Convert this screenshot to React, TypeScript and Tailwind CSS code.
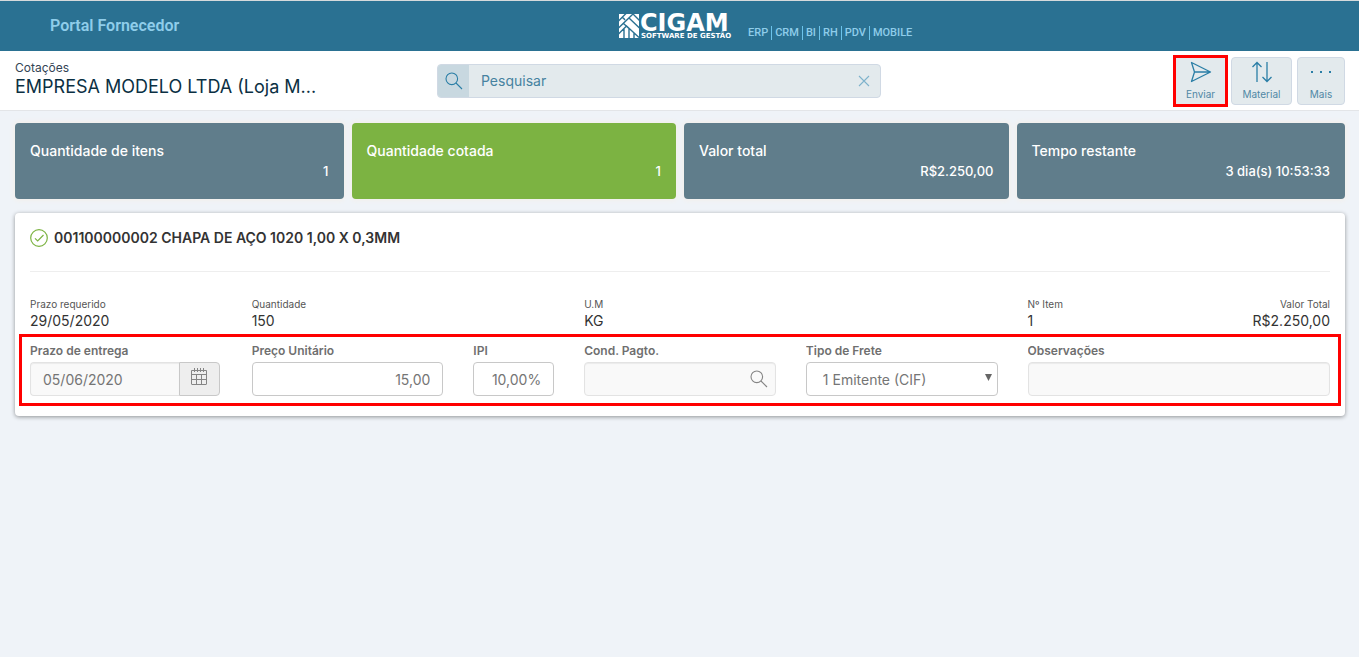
import React from "react";
import clsx from "clsx";

const summary = [
  { label: "Quantidade de itens", value: "1", color: "bg-[#607d8b]" },
  { label: "Quantidade cotada", value: "1", color: "bg-[#7cb342]" },
  { label: "Valor total", value: "R$2.250,00", color: "bg-[#607d8b]" },
  { label: "Tempo restante", value: "3 dia(s) 10:53:33", color: "bg-[#607d8b]" },
];

const details = [
  { label: "Prazo requerido", value: "29/05/2020", span: "col-span-2" },
  { label: "Quantidade", value: "150", span: "col-span-3" },
  { label: "U.M", value: "KG", span: "col-span-4" },
  { label: "Nº Item", value: "1", span: "col-span-1" },
  { label: "Valor Total", value: "R$2.250,00", span: "col-span-2 text-right" },
];

const products = ["ERP", "CRM", "BI", "RH", "PDV", "MOBILE"];

const labelClass = "block truncate text-[12px] leading-4 font-semibold text-[#6f6f6f]";
const inputClass =
  "block h-[34px] w-full min-w-0 rounded border border-[#c8c8c8] bg-white px-3 text-[14px] text-[#757575] outline-none";
const disabledClass =
  "block h-[34px] w-full min-w-0 rounded-sm border border-[#e3e3e3] bg-[#f9f9f9] px-3 text-[14px] text-[#757575] shadow-[inset_0_1px_1px_rgba(0,0,0,0.06)] outline-none";

const SearchIcon = ({ className }: { className?: string }) => (
  <svg viewBox="0 0 18 18" className={className} fill="none" stroke="currentColor" strokeWidth="1.1">
    <circle cx="6.8" cy="6.8" r="5.8" />
    <path d="M11 11l6 6" />
  </svg>
);

const CalendarIcon = () => (
  <svg viewBox="0 0 18 18" className="size-[18px]" fill="none" stroke="#858585">
    <path d="M1.5 2.500h15v13.500a.5.5 0 0 1-.5.5H2a.5.5 0 0 1-.5-.5zM1.500 6.500h15M1.500 11.500h15M6.500 6.500v10M11.500 6.500v10" />
    <path d="M4.500 0v4M7.500 0v4M10.500 0v4M13.500 0v4" />
  </svg>
);

const SendIcon = () => (
  <svg viewBox="0 0 22 22" className="size-[22px]" fill="none" stroke="#2a7ea6" strokeWidth="1.3" strokeLinejoin="round">
    <path d="M1.500 1.500L20.500 11L1.500 20.500L4.500 11zM4.500 11h16" />
  </svg>
);

const SwapIcon = () => (
  <svg viewBox="0 0 22 22" className="size-[22px]" fill="none" stroke="#2a7ea6" strokeWidth="1.3">
    <path d="M6 21V1.500M1.500 6L6 1.500L10.500 6M16 1v19.500M11.500 16L16 20.500L20.500 16" />
  </svg>
);

const MoreIcon = () => (
  <svg viewBox="0 0 22 22" className="size-[22px]" fill="#2a7ea6">
    <path d="M1 10h2v2H1zM10 10h2v2h-2zM19 10h2v2h-2z" />
  </svg>
);

const Logo = () => (
  <svg viewBox="0 -6 121 38" className="h-[38px] w-[121px]" role="img" aria-label="CIGAM Software de Gestão">
    <path fill="#fff" d="M0 1h20v24H0z" />
    {/* Roof lines cut out of the white square */}
    <path
      fill="none"
      stroke="#2a7192"
      strokeWidth="1.400"
      d="M-1 8.500L7.500 0M-1 15.500L14 1M10 5L21 15.500M14 1L21 8M4.500 10.500L10 15.500M-1 21.500L7 13.500M7 12.500L20 24.500M5 15.500V26M10 16V26M15 20V26M3.500 4L6 7"
    />
    <text x="21" y="18" fill="#fff" fontFamily="DejaVu Sans, sans-serif" fontWeight="700" fontSize="24">
      CIGAM
    </text>
    <text x="22" y="25" fill="#fff" fontFamily="DejaVu Sans, sans-serif" fontWeight="700" fontSize="7">
      SOFTWARE DE GESTÃO
    </text>
  </svg>
);

const ToolButton = ({ label, className, children }: { label: string; className?: string; children: React.ReactNode }) => (
  <button
    type="button"
    className={clsx(
      "flex flex-col items-center justify-center gap-1 bg-[#e3eaed] text-[10px] leading-[14px] text-[#5088a5]",
      className
    )}
  >
    {children}
    {label}
  </button>
);

const App = () => {
  return (
    <div className="min-h-screen bg-[#eff3f8] font-['Inter',sans-serif] text-[#333]">
      {/* Top bar */}
      <header className="grid h-[51px] grid-cols-[1fr_auto_1fr] items-center border-t border-[#d5dadc] bg-[#2a7192] font-['Roboto',sans-serif] font-medium text-[#8fcdea]">
        <span className="pl-[50px] text-base font-semibold">Portal Fornecedor</span>
        <Logo />
        <ul className="flex pt-3.5 pl-2 text-[11px] leading-[14px]">
          {products.map((product) => (
            <li key={product} className="border-l border-[#6cc3ea] px-[3px] first:border-l-0 first:pl-0">
              {product}
            </li>
          ))}
        </ul>
      </header>

      {/* Page heading, search and actions */}
      <div className="grid h-[60px] grid-cols-[422fr_444fr_464fr] items-center border-b border-[#e3e5e8] bg-white pr-3.5 pl-[15px]">
        <div className="pb-1">
          <p className="text-xs leading-4 text-[#345]">Cotações</p>
          <h1 className="text-[18px] leading-[22px] text-[#0b3043]">EMPRESA MODELO LTDA (Loja M...</h1>
        </div>
        <form className="flex h-[34px] overflow-hidden rounded-sm border border-[#d0d9e4] bg-[#e3eaed]">
          <button
            type="button"
            aria-label="Buscar"
            className="flex w-[31px] shrink-0 items-center justify-center bg-[#c8d8e0] text-[#2a7ea6]"
          >
            <SearchIcon className="size-[18px]" />
          </button>
          <input
            type="text"
            aria-label="Pesquisar"
            placeholder="Pesquisar"
            className="min-w-0 flex-1 bg-transparent px-3 text-[14px] text-[#4682a0] outline-none placeholder:text-[#4682a0]"
          />
          <button type="button" aria-label="Limpar" className="flex w-8 items-center justify-center">
            <svg viewBox="0 0 12 12" className="size-3" fill="none" stroke="#7fb2cc" strokeWidth="1.1">
              <path d="M1 1l10 10M11 1L1 11" />
            </svg>
          </button>
        </form>
        <div className="flex items-center justify-end">
          <ToolButton label="Enviar" className="h-[52px] w-[55px] border-3 border-[#f00]">
            <SendIcon />
          </ToolButton>
          <ToolButton label="Material" className="ml-[3px] h-12 w-[61px] rounded-sm border border-[#d0d9e4]">
            <SwapIcon />
          </ToolButton>
          <ToolButton label="Mais" className="ml-[5px] h-12 w-12 rounded-sm border border-[#d0d9e4]">
            <MoreIcon />
          </ToolButton>
        </div>
      </div>

      <main className="pt-3 pr-3.5 pl-[15px]">
        {/* Summary cards */}
        <section className="flex">
          {summary.map((item) => (
            <div key={item.label} className="w-1/4 px-1 first:pl-0 last:pr-0">
              <div
                className={clsx(
                  "h-[76px] rounded px-[15px] pt-[18px] leading-5 font-medium text-white shadow-[0_0_4px_2px_#f3f0ed]",
                  item.color
                )}
              >
                <p className="text-[14px] leading-5">{item.label}</p>
                <p className="text-right text-[13px] leading-5">{item.value}</p>
              </div>
            </div>
          ))}
        </section>

        {/* Quotation item */}
        <section className="mt-3.5 rounded bg-white px-[15px] pb-2.5 shadow-[0_1px_4px_rgba(0,0,0,0.4)]">
          <div className="flex h-[59px] items-center gap-1.5 border-b border-[#eee] pb-2">
            <svg viewBox="0 0 18 18" className="size-[18px] shrink-0" fill="none" stroke="#7cb342" strokeWidth="1.200">
              <circle cx="9" cy="9" r="8.300" />
              <path d="M5 9.300l2.700 2.700L13.500 6" />
            </svg>
            <h2 className="text-[14px] leading-5 font-semibold">001100000002 CHAPA DE AÇO 1020 1,00 X 0,3MM</h2>
          </div>

          <dl className="grid grid-cols-12 gap-x-[30px] pt-6 pb-1">
            {details.map((detail) => (
              <div key={detail.label} className={clsx("whitespace-nowrap", detail.span)}>
                <dt className="text-[10px] leading-4 text-[#555]">{detail.label}</dt>
                <dd className="text-[14px] leading-[18px]">{detail.value}</dd>
              </div>
            ))}
          </dl>

          <form className="-mx-[11px] grid grid-cols-12 gap-x-[30px] border-3 border-[#f00] px-2 pt-1.5 pb-[7px]">
            <div className="col-span-2">
              <label htmlFor="prazo" className={labelClass}>Prazo de entrega</label>
              <div className="mt-[3px] flex pr-0.5">
                <input
                  id="prazo"
                  type="text"
                  defaultValue="05/06/2020"
                  disabled
                  className={clsx(disabledClass, "rounded-r-none border-r-0")}
                />
                <button
                  type="button"
                  aria-label="Abrir calendário"
                  className="flex h-[34px] w-[41px] shrink-0 items-center justify-center rounded-r border border-[#c8c8c8] bg-[#eee] pb-1"
                >
                  <CalendarIcon />
                </button>
              </div>
            </div>
            <div className="col-span-2">
              <label htmlFor="preco" className={labelClass}>Preço Unitário</label>
              <input id="preco" type="text" defaultValue="15,00" className={clsx(inputClass, "mt-[3px] text-right")} />
            </div>
            <div className="col-span-1">
              <label htmlFor="ipi" className={labelClass}>IPI</label>
              <input id="ipi" type="text" defaultValue="10,00%" className={clsx(inputClass, "mt-[3px] text-right")} />
            </div>
            <div className="col-span-2">
              <label htmlFor="pagto" className={labelClass}>Cond. Pagto.</label>
              <div className="relative mt-[3px]">
                <input id="pagto" type="text" disabled className={disabledClass} />
                <button type="button" aria-label="Buscar condição" className="absolute inset-y-0 right-2 text-[#858585]">
                  <SearchIcon className="size-[18px]" />
                </button>
              </div>
            </div>
            <div className="col-span-2">
              <label htmlFor="frete" className={labelClass}>Tipo de Frete</label>
              <div className="relative mt-[3px]">
                <select id="frete" className={clsx(inputClass, "appearance-none pl-4")}>
                  <option>1 Emitente (CIF)</option>
                </select>
                <svg viewBox="0 0 7 7" className="pointer-events-none absolute top-3 right-1.5 size-[7px]" fill="#666">
                  <path d="M0 0h7L3.500 7z" />
                </svg>
              </div>
            </div>
            <div className="col-span-3">
              <label htmlFor="obs" className={labelClass}>Observações</label>
              <input id="obs" type="text" disabled className={clsx(disabledClass, "mt-[3px]")} />
            </div>
          </form>
        </section>
      </main>
    </div>
  );
};

export default App;
